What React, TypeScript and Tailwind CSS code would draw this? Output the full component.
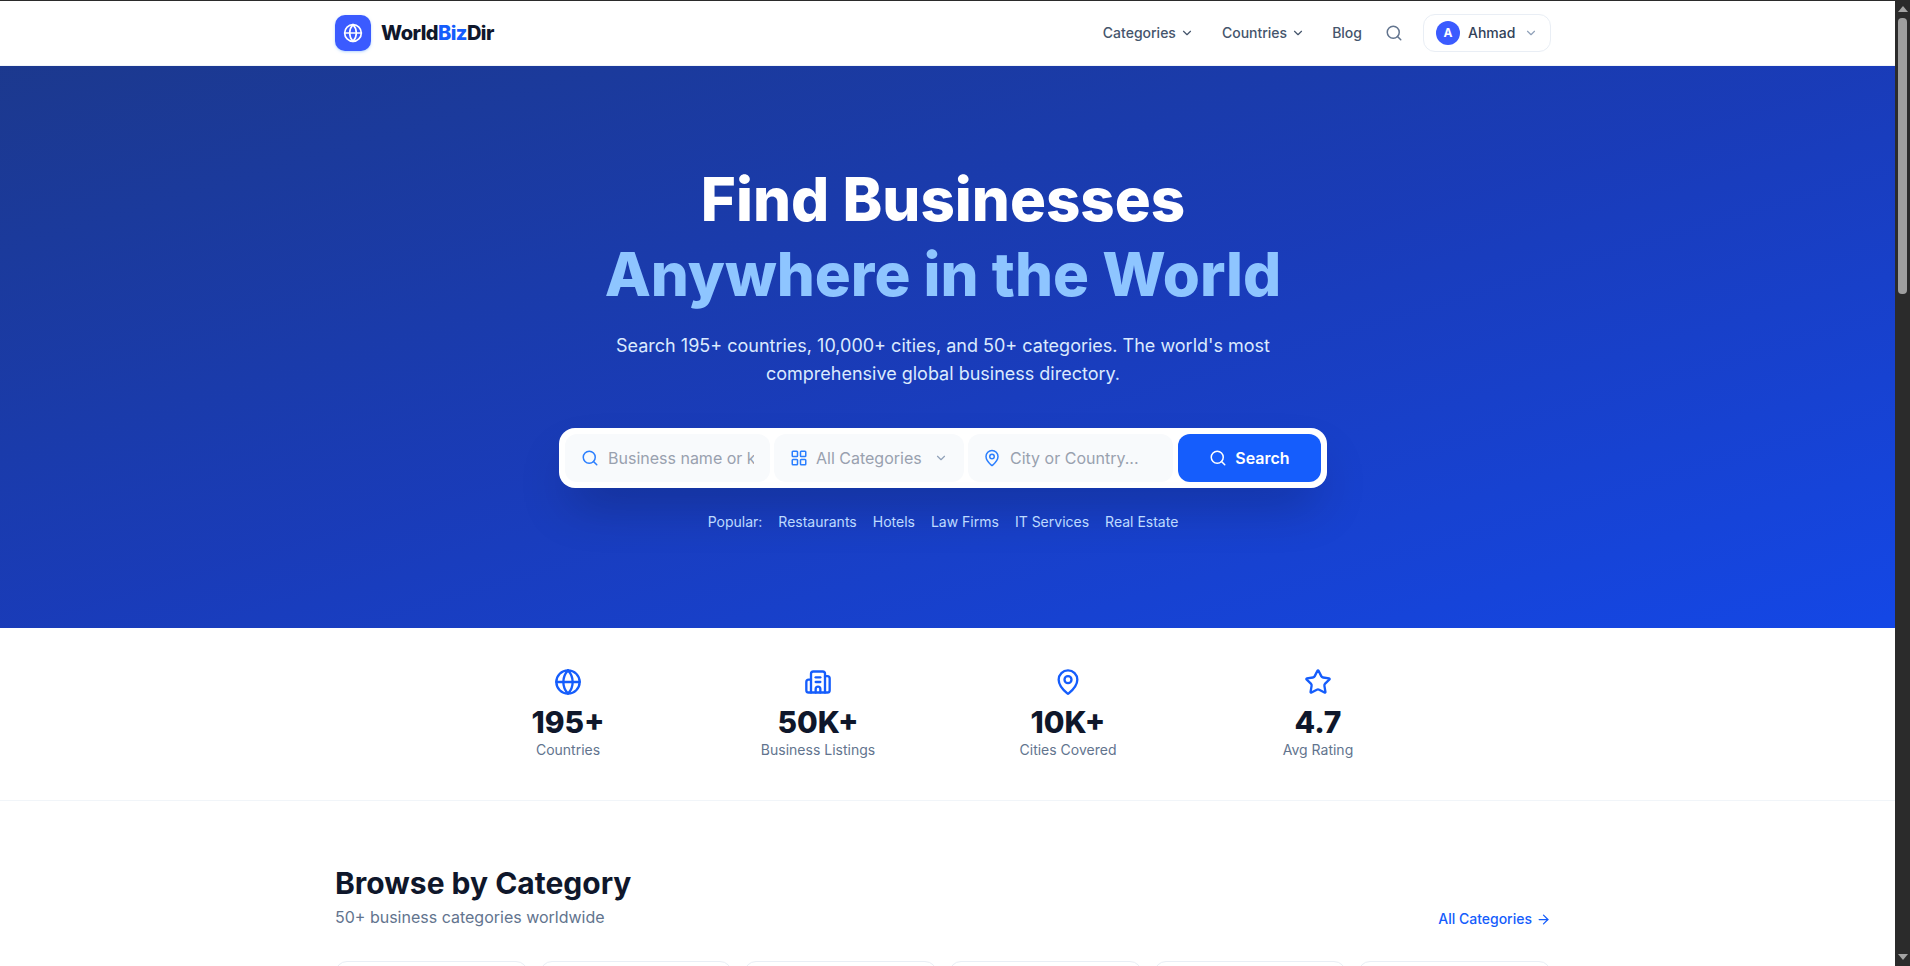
import { ArrowRight, Building2, ChevronDown, Globe, LayoutGrid, MapPin, Search, Star } from 'lucide-react';

const stats = [
  { icon: Globe, value: '195+', label: 'Countries' },
  { icon: Building2, value: '50K+', label: 'Business Listings' },
  { icon: MapPin, value: '10K+', label: 'Cities Covered' },
  { icon: Star, value: '4.7', label: 'Avg Rating' },
];

const popular = ['Restaurants', 'Hotels', 'Law Firms', 'IT Services', 'Real Estate'];

function Navbar() {
  return (
    <header className="h-[65px] shrink-0 border-b border-slate-100 bg-white pr-[9px]">
      <div className="mx-auto flex h-full w-[1216px] items-center justify-between">
        <div className="flex items-center gap-[10px]">
          <div className="flex h-9 w-9 items-center justify-center rounded-[10px] bg-[#3b5bff] shadow-sm shadow-blue-200">
            <Globe className="h-5 w-5 text-white" strokeWidth={2} />
          </div>
          <span className="text-xl font-extrabold tracking-[-0.55px] text-slate-900">
            World<span className="text-blue-600">Biz</span>Dir
          </span>
        </div>
        <nav className="flex items-center">
          <button className="flex items-center gap-1 text-sm font-medium text-slate-600">
            Categories <ChevronDown className="h-[14px] w-[14px]" />
          </button>
          <button className="ml-[28px] flex items-center gap-1 text-sm font-medium text-slate-600">
            Countries <ChevronDown className="h-[14px] w-[14px]" />
          </button>
          <a className="ml-[27px] text-sm font-medium text-slate-600">Blog</a>
          <Search className="ml-[23px] h-[18px] w-[18px] text-slate-500" />
          <button className="ml-5 flex h-[38px] w-[128px] items-center rounded-xl border border-[#e9eef5] pl-3 text-sm font-medium text-slate-700">
            <span className="flex h-6 w-6 items-center justify-center rounded-full bg-[#3b5bff] text-xs font-bold text-white">A</span>
            <span className="ml-2">Ahmad</span>
            <ChevronDown className="ml-[9px] h-[14px] w-[14px] text-slate-400" />
          </button>
        </nav>
      </div>
    </header>
  );
}

function SearchBar() {
  return (
    <div className="mt-10 flex h-[60px] w-[768px] items-center gap-1 rounded-2xl bg-white p-[6px] shadow-2xl">
      <div className="flex h-12 w-[205px] items-center rounded-xl bg-slate-50 px-4">
        <Search className="h-[18px] w-[18px] shrink-0 text-blue-500" />
        <input
          readOnly
          placeholder="Business name or keyword..."
          className="ml-[9px] w-full min-w-0 bg-transparent text-base outline-none placeholder:text-gray-400"
        />
      </div>
      <div className="flex h-12 w-[190px] items-center rounded-xl bg-slate-50 pl-4">
        <LayoutGrid className="h-[18px] w-[18px] shrink-0 text-blue-500" />
        <span className="ml-2 text-base text-gray-400">All Categories</span>
        <ChevronDown className="ml-3 h-[14px] w-[14px] text-slate-400" />
      </div>
      <div className="flex h-12 w-[205px] items-center rounded-xl bg-slate-50 pl-[15px]">
        <MapPin className="h-[18px] w-[18px] shrink-0 text-blue-500" />
        <span className="ml-[9px] text-base text-gray-400">City or Country...</span>
      </div>
      <button className="ml-px flex h-12 w-[143px] items-center justify-center gap-2 rounded-xl bg-blue-600 text-base font-semibold text-white">
        <Search className="h-[18px] w-[18px]" /> Search
      </button>
    </div>
  );
}

function Hero() {
  return (
    <section className="flex h-[562px] shrink-0 flex-col items-center bg-gradient-to-br from-blue-900 via-blue-800 to-blue-700 pr-[9px] pt-[96px] text-center">
      <h1 className="text-[60px] font-extrabold leading-[75px] text-white">
        Find Businesses
        <br />
        <span className="text-blue-300">Anywhere in the World</span>
      </h1>
      <p className="mt-5 w-[672px] text-lg leading-7 text-blue-100">
        Search 195+ countries, 10,000+ cities, and 50+ categories. The world's most comprehensive global business directory.
      </p>
      <SearchBar />
      <div className="mt-6 flex items-center gap-4 text-sm text-blue-200">
        <span>Popular:</span>
        {popular.map((item) => (
          <a key={item}>{item}</a>
        ))}
      </div>
    </section>
  );
}

function Stats() {
  return (
    <section className="h-[173px] shrink-0 border-b border-slate-100 bg-white pr-[9px] pt-10">
      <div className="mx-auto grid w-[1000px] grid-cols-4">
        {stats.map(({ icon: Icon, value, label }) => (
          <div key={label} className="flex flex-col items-center">
            <Icon className="h-7 w-7 text-blue-600" />
            <div className="mt-2 text-3xl font-extrabold text-slate-900">{value}</div>
            <div className="text-sm text-slate-500">{label}</div>
          </div>
        ))}
      </div>
    </section>
  );
}

function Categories() {
  return (
    <section className="bg-white pr-[9px] pt-16">
      <div className="mx-auto w-[1216px]">
        <div className="flex items-end justify-between">
          <div>
            <h2 className="text-3xl font-bold text-slate-900">Browse by Category</h2>
            <p className="mt-1 text-base text-slate-500">50+ business categories worldwide</p>
          </div>
          <a className="flex items-center gap-1 text-sm font-medium text-blue-600">
            All Categories <ArrowRight className="h-[15px] w-[15px]" />
          </a>
        </div>
        <div className="mt-8 grid grid-cols-6 gap-3">
          {[0, 1, 2, 3, 4, 5].map((i) => (
            <div key={i} className="h-24 rounded-xl border border-[#e9eef5] bg-white" />
          ))}
        </div>
      </div>
    </section>
  );
}

function Scrollbar() {
  return (
    <div className="flex h-full w-[15px] shrink-0 flex-col items-center bg-[#2b2b2b]">
      <div className="mt-[6px] h-0 w-0 border-x-[5px] border-b-[6px] border-x-transparent border-b-[#a3a3a3]" />
      <div className="mt-[6px] h-[276px] w-[9px] rounded-[4px] bg-[#9f9f9f]" />
      <div className="mb-[6px] mt-auto h-0 w-0 border-x-[5px] border-t-[6px] border-x-transparent border-t-[#a3a3a3]" />
    </div>
  );
}

export default function App() {
  return (
    <div className="flex h-[966px] w-full overflow-hidden bg-white font-['Inter',sans-serif]">
      <main className="flex min-w-0 flex-1 flex-col overflow-hidden border-t border-[#2b2b2b]">
        <Navbar />
        <Hero />
        <Stats />
        <Categories />
      </main>
      <Scrollbar />
    </div>
  );
}
